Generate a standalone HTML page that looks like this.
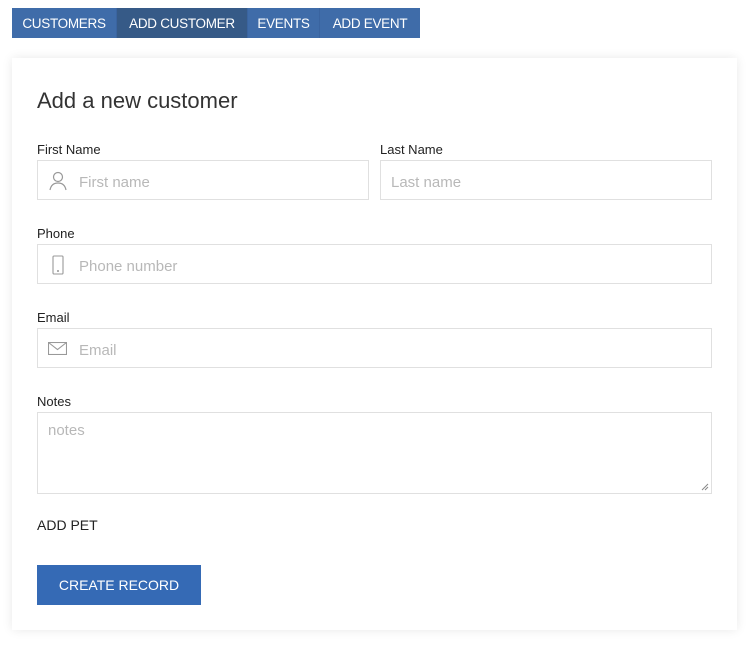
<!DOCTYPE html>
<html><head><style>
body{margin:0;background:#fff;font-family:"Liberation Sans",sans-serif;width:750px;height:645px;position:relative;overflow:hidden}
.nav{position:absolute;left:12px;top:8px;height:30px;display:flex;background:#3f6ca9}
.nav div{color:#fff;font-size:13.5px;letter-spacing:-0.3px;line-height:31px;text-align:center;border-right:1px solid #3a64a0;box-sizing:border-box;white-space:nowrap}
.nav .a{background:#365a87}
.card{position:absolute;left:12px;top:58px;width:725px;height:572px;background:#fff;box-shadow:0 0 10px rgba(0,0,0,.09)}
.abs{position:absolute}
h1{position:absolute;left:25px;top:30px;margin:0;font-weight:normal;font-size:22px;color:#333}
.lab{position:absolute;font-size:13px;color:#222}
.in{position:absolute;height:38px;border:1px solid #e0e0e0;box-sizing:content-box}
.ph{position:absolute;top:13px;font-size:15px;color:#b8b8b8}
.btn{position:absolute;left:25px;top:507px;width:164px;height:40px;background:#356ab5;color:#fff;font-size:14px;line-height:40px;text-align:center}
</style></head><body>
<div class="nav"><div style="width:105px">CUSTOMERS</div><div class="a" style="width:131px">ADD CUSTOMER</div><div style="width:72px">EVENTS</div><div style="width:100px;border:0">ADD EVENT</div></div>
<div class="card">
<h1>Add a new customer</h1>
<div class="lab" style="left:25px;top:84px">First Name</div>
<div class="in" style="left:25px;top:102px;width:330px">
<svg class="abs" style="left:11px;top:10px" width="18" height="20" viewBox="0 0 18 20" fill="none" stroke="#999" stroke-width="1.2"><circle cx="9" cy="6" r="4.5"/><path d="M1 19c1-5 4-7 8-7s7 2 8 7"/></svg>
<span class="ph" style="left:41px">First name</span></div>
<div class="lab" style="left:368px;top:84px">Last Name</div>
<div class="in" style="left:368px;top:102px;width:330px"><span class="ph" style="left:10px">Last name</span></div>
<div class="lab" style="left:25px;top:168px">Phone</div>
<div class="in" style="left:25px;top:186px;width:673px">
<svg class="abs" style="left:14px;top:10px" width="12" height="20" viewBox="0 0 12 20" fill="none" stroke="#999" stroke-width="1.1"><rect x="1" y="1" width="10" height="18" rx="1"/><circle cx="6" cy="16" r=".5" fill="#999"/></svg>
<span class="ph" style="left:41px">Phone number</span></div>
<div class="lab" style="left:25px;top:252px">Email</div>
<div class="in" style="left:25px;top:270px;width:673px">
<svg class="abs" style="left:10px;top:13px" width="19" height="13" viewBox="0 0 19 13" fill="none" stroke="#999" stroke-width="1.1"><rect x=".5" y=".5" width="18" height="12"/><path d="M.5 .5l9 7 9-7"/></svg>
<span class="ph" style="left:41px">Email</span></div>
<div class="lab" style="left:25px;top:336px">Notes</div>
<div class="in" style="left:25px;top:354px;width:673px;height:80px"><span class="ph" style="left:10px;top:9px">notes</span>
<svg class="abs" style="right:2px;bottom:2px" width="8" height="8"><path d="M7 1L1 7M7 4L4 7" stroke="#888"/></svg></div>
<div class="lab" style="left:25px;top:459px;font-size:14px">ADD PET</div>
<div class="btn">CREATE RECORD</div>
</div>
</body></html>
